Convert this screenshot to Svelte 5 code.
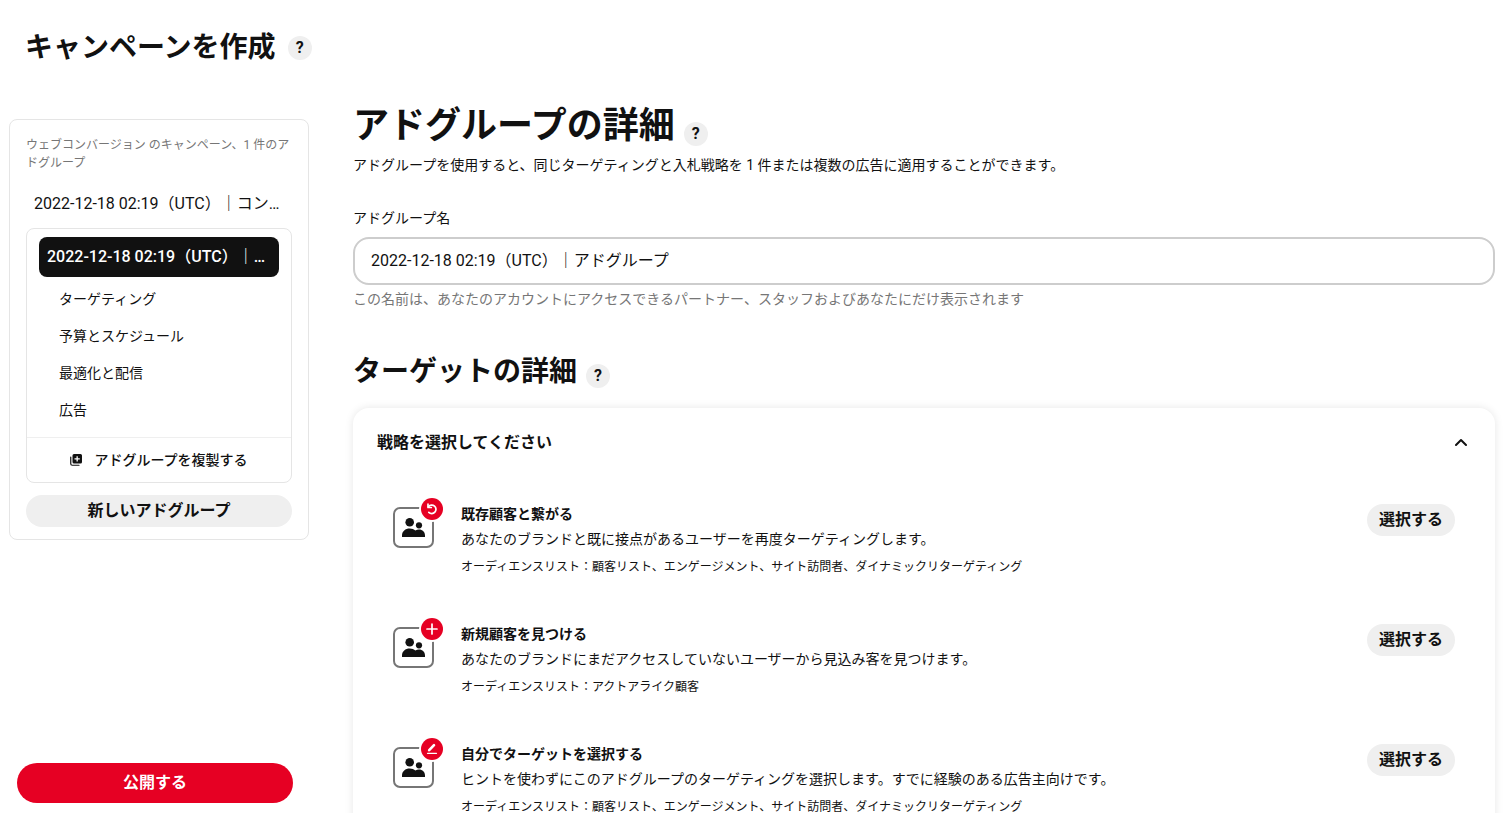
<script>
    let adGroupName = $state('2022-12-18 02:19（UTC）｜アドグループ');
    let expanded = $state(true);

    const sections = ['ターゲティング', '予算とスケジュール', '最適化と配信', '広告'];

    const strategies = [
        {
            icon: 'retarget',
            title: '既存顧客と繋がる',
            description: 'あなたのブランドと既に接点があるユーザーを再度ターゲティングします。',
            lists: 'オーディエンスリスト：顧客リスト、エンゲージメント、サイト訪問者、ダイナミックリターゲティング',
        },
        {
            icon: 'add',
            title: '新規顧客を見つける',
            description: 'あなたのブランドにまだアクセスしていないユーザーから見込み客を見つけます。',
            lists: 'オーディエンスリスト：アクトアライク顧客',
        },
        {
            icon: 'edit',
            title: '自分でターゲットを選択する',
            description: 'ヒントを使わずにこのアドグループのターゲティングを選択します。すでに経験のある広告主向けです。',
            lists: 'オーディエンスリスト：顧客リスト、エンゲージメント、サイト訪問者、ダイナミックリターゲティング',
        },
    ];
</script>

{#snippet help()}
    <button class="help" type="button" aria-label="ヘルプ">?</button>
{/snippet}

<div class="page">
    <header>
        <h2>キャンペーンを作成</h2>
        {@render help()}
    </header>

    <div class="columns">
        <aside>
            <nav class="outline">
                <p class="summary">ウェブコンバージョン のキャンペーン、1 件のアドグループ</p>
                <a class="campaign" href="#campaign">2022-12-18 02:19（UTC）｜コンバージョン</a>

                <div class="group">
                    <a class="current" href="#adgroup">2022-12-18 02:19（UTC）｜アドグループ</a>
                    <ul>
                        {#each sections as section}
                            <li><a href="#adgroup">{section}</a></li>
                        {/each}
                    </ul>
                    <button class="duplicate" type="button">
                        <svg width="12" height="12" viewBox="0 0 24 24" aria-hidden="true">
                            <path d="M1.500 6v13.500a3 3 0 0 0 3 3H18" fill="none" stroke="#111" stroke-width="2.400" stroke-linecap="round" />
                            <path fill="#111" fill-rule="evenodd" d="M8 0h13a3 3 0 0 1 3 3v13a3 3 0 0 1-3 3H8a3 3 0 0 1-3-3V3a3 3 0 0 1 3-3zm5 4.500v4H9v2.600h4v4h2.600v-4h4V8.500h-4v-4z" />
                        </svg>
                        アドグループを複製する
                    </button>
                </div>

                <button class="pill wide" type="button">新しいアドグループ</button>
            </nav>

            <button class="publish" type="button">公開する</button>
        </aside>

        <main>
            <div class="heading">
                <h1>アドグループの詳細</h1>
                {@render help()}
            </div>
            <p class="intro">アドグループを使用すると、同じターゲティングと入札戦略を 1 件または複数の広告に適用することができます。</p>

            <div class="field">
                <label for="adgroup-name">アドグループ名</label>
                <input id="adgroup-name" type="text" bind:value={adGroupName} />
                <p class="hint">この名前は、あなたのアカウントにアクセスできるパートナー、スタッフおよびあなたにだけ表示されます</p>
            </div>

            <div class="heading">
                <h2>ターゲットの詳細</h2>
                {@render help()}
            </div>

            <section class="card">
                <button class="toggle" type="button" aria-expanded={expanded} onclick={() => (expanded = !expanded)}>
                    戦略を選択してください
                    <svg class:closed={!expanded} width="12" height="12" viewBox="0 0 12 12" aria-hidden="true">
                        <path d="M1 8l5-5 5 5" fill="none" stroke="#111" stroke-width="2" stroke-linecap="round" stroke-linejoin="round" />
                    </svg>
                </button>

                {#if expanded}
                    <ul class="strategies">
                        {#each strategies as strategy}
                            <li>
                                <svg class="audience" width="52" height="52" viewBox="0 0 52 52" aria-hidden="true">
                                    <rect x="2" y="11" width="39" height="39" rx="6" fill="#fff" stroke="#767676" stroke-width="2" />
                                    <g fill="#111">
                                        <circle cx="17.7" cy="25.3" r="4.3" />
                                        <circle cx="27" cy="28.3" r="3.1" />
                                        <path d="M10 40v-1.500c0-4.300 3.400-7 7.700-7 2.300 0 4.300.8 5.700 2.100a6.300 6.300 0 0 1 3.600-1.100c3.500 0 6 2.500 6 6V40z" />
                                    </g>
                                    <circle cx="40" cy="12" r="13" fill="#fff" />
                                    <circle cx="40" cy="12" r="11" fill="#e60023" />
                                    <g fill="none" stroke="#fff" stroke-width="1.7" stroke-linecap="round" stroke-linejoin="round">
                                        {#if strategy.icon === 'retarget'}
                                            <path d="M36.500 9.700a4.200 4.200 0 1 1 .3 5.600" />
                                            <path d="M36 7.200v3.300h3.300" />
                                        {:else if strategy.icon === 'add'}
                                            <path d="M40 7v10M35 12h10" />
                                        {:else}
                                            <path d="M37.200 13.200l4.800-5" stroke-width="2.6" />
                                            <path d="M35.500 16.300h9" stroke-width="1.2" />
                                        {/if}
                                    </g>
                                </svg>
                                <div class="text">
                                    <h3>{strategy.title}</h3>
                                    <p>{strategy.description}</p>
                                    <p class="lists">{strategy.lists}</p>
                                </div>
                                <button class="pill" type="button">選択する</button>
                            </li>
                        {/each}
                    </ul>
                {/if}
            </section>
        </main>
    </div>
</div>

<style>
    :global(body) {
        background: #fff;
    }
    .page {
        box-sizing: border-box;
        height: 100vh;
        padding-bottom: 15px;
        display: flex;
        flex-direction: column;
        color: #111;
        font-family: Roboto, "Noto Sans CJK JP", sans-serif;
        font-size: 14px;
        line-height: 20px;
    }
    h1, h2, h3, p, ul {
        margin: 0;
        padding: 0;
    }
    ul {
        list-style: none;
    }
    h1 {
        font-size: 36px;
        line-height: 40px;
    }
    h2 {
        font-size: 28px;
        line-height: 32px;
    }
    h3 {
        font-size: 14px;
        line-height: 20px;
    }
    a {
        color: inherit;
        text-decoration: none;
    }
    button {
        border: 0;
        padding: 0;
        color: inherit;
        font: inherit;
        background: none;
        cursor: pointer;
    }
    header {
        display: flex;
        align-items: center;
        gap: 12px;
        padding: 32px 25px 29px;
    }
    .help {
        flex: none;
        width: 24px;
        height: 24px;
        border-radius: 50%;
        background: #efefef;
        font-size: 16px;
        font-weight: 700;
    }
    .columns {
        flex: 1;
        min-height: 0;
        display: flex;
    }
    aside {
        box-sizing: border-box;
        flex: none;
        width: 309px;
        padding: 26px 0 10px 9px;
        display: flex;
        flex-direction: column;
        justify-content: space-between;
    }
    .outline {
        display: flex;
        flex-direction: column;
        padding: 16px 16px 12px;
        border: 1px solid #e5e5e5;
        border-radius: 8px;
    }
    .summary {
        color: #767676;
        font-size: 12px;
        line-height: 18px;
    }
    .campaign, .current {
        overflow: hidden;
        white-space: nowrap;
        text-overflow: ellipsis;
        font-size: 16px;
    }
    .campaign {
        margin: 20px 0 12px;
        padding: 0 8px;
        line-height: 24px;
    }
    .group {
        display: flex;
        flex-direction: column;
        border: 1px solid #e5e5e5;
        border-radius: 8px;
    }
    .current {
        margin: 8px 12px 4px;
        padding: 0 8px;
        border-radius: 8px;
        background: #111;
        color: #fff;
        font-weight: 500;
        line-height: 40px;
    }
    .group ul {
        padding: 0 32px 8px;
    }
    .group li {
        line-height: 37px;
    }
    .duplicate {
        display: flex;
        align-items: center;
        justify-content: center;
        gap: 12px;
        height: 45px;
        border-top: 1px solid #efefef;
        font-weight: 500;
    }
    .pill {
        flex: none;
        height: 32px;
        padding: 0 12px;
        border-radius: 16px;
        background: #efefef;
        font-size: 16px;
        font-weight: 700;
    }
    .wide {
        margin-top: 12px;
    }
    .publish {
        height: 40px;
        margin: 0 16px 0 8px;
        border-radius: 20px;
        background: #e60023;
        color: #fff;
        font-size: 16px;
        font-weight: 700;
    }
    main {
        flex: 1;
        min-width: 0;
        padding: 13px 11px 0 44px;
        overflow-y: auto;
        scrollbar-width: none;
    }
    .heading {
        display: flex;
        align-items: flex-end;
        gap: 9px;
    }
    .intro {
        margin-top: 9px;
    }
    .field {
        display: flex;
        flex-direction: column;
        margin: 33px 0 47px;
    }
    input {
        box-sizing: border-box;
        height: 48px;
        margin: 9px 0 4px;
        padding: 0 16px 4px;
        border: 2px solid #cdcdcd;
        border-radius: 16px;
        color: inherit;
        font: inherit;
        font-size: 16px;
    }
    .hint {
        color: #767676;
    }
    .card {
        margin-top: 20px;
        border-radius: 16px;
        box-shadow: 0 0 8px rgba(0, 0, 0, 0.1);
    }
    .toggle {
        display: flex;
        align-items: center;
        justify-content: space-between;
        width: 100%;
        padding: 25px 28px 23px 24px;
        font-size: 16px;
        font-weight: 700;
    }
    .closed {
        transform: rotate(180deg);
    }
    .strategies {
        padding: 28px 40px 28px 39px;
    }
    .strategies li {
        display: flex;
        align-items: flex-start;
        min-height: 72px;
        margin-bottom: 48px;
    }
    .audience {
        flex: none;
        margin: -7px 17px 0 0;
    }
    .text {
        flex: 1;
        min-width: 0;
    }
    .text p {
        margin-top: 5px;
    }
    .text .lists {
        margin-top: 9px;
        font-size: 12px;
        line-height: 18px;
    }
</style>
